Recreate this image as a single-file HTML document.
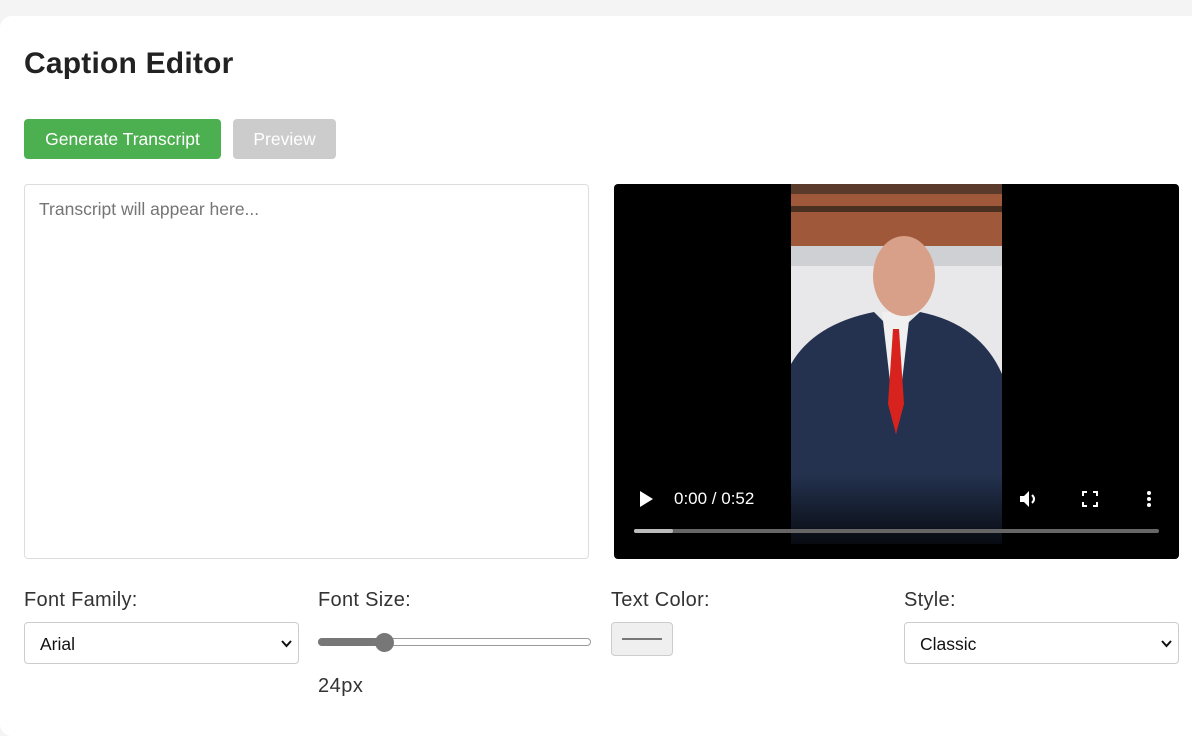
<!DOCTYPE html>
<html><head><style>
body{margin:0;width:1192px;height:713px;background:#f4f4f4;font-family:"Liberation Sans",sans-serif;overflow:hidden;position:relative;color:#222}
.card{position:absolute;left:0;top:16px;width:1210px;height:720px;background:#fff;border-radius:12px}
h1{position:absolute;left:24px;top:47px;margin:0;font-size:30px;font-weight:bold;color:#222;letter-spacing:0.2px}
.btn{position:absolute;top:119px;height:40px;border-radius:4px;color:#fff;font-size:17.5px;line-height:40px;text-align:center}
.ta{position:absolute;left:24px;top:184px;width:563px;height:373px;border:1px solid #ddd;border-radius:4px}
.ta span{position:absolute;left:14px;top:14px;color:#757575;font-size:17.5px}
.video{position:absolute;left:614px;top:184px;width:565px;height:375px;background:#000;border-radius:4px;overflow:hidden}
.lbl{position:absolute;top:589px;font-size:20px;color:#333;letter-spacing:0.3px}
.sel{position:absolute;top:622px;height:42px;border:1px solid #ccc;border-radius:4px;box-sizing:border-box;font-size:17.5px;line-height:42px;padding-left:15px;color:#111}
.ctl{position:absolute;color:#fff;font-size:17px}
</style></head><body>
<div class="card"></div>
<h1>Caption Editor</h1>
<div class="btn" style="left:24px;width:197px;background:#4caf50">Generate Transcript</div>
<div class="btn" style="left:233px;width:103px;background:#ccc">Preview</div>
<div class="ta"><span>Transcript will appear here...</span></div>
<div class="video">
<svg width="565" height="375" style="position:absolute;left:0;top:0">
<defs><linearGradient id="g" x1="0" y1="0" x2="0" y2="1"><stop offset="0" stop-color="#000" stop-opacity="0"/><stop offset="1" stop-color="#000" stop-opacity=".9"/></linearGradient></defs>
<rect x="177" y="0" width="211" height="360" fill="#e8e8ea"/>
<rect x="177" y="0" width="211" height="62" fill="#a0583a"/>
<rect x="177" y="0" width="211" height="10" fill="#5a3a2a"/>
<rect x="177" y="22" width="211" height="6" fill="#4a3020"/>
<rect x="177" y="62" width="211" height="20" fill="#cfd0d4"/>
<path d="M177 360 L177 180 Q200 140 260 128 L282 150 L306 128 Q366 140 388 190 L388 360Z" fill="#24324f"/>
<path d="M268 128 L282 250 L296 128Z" fill="#f0f0f0"/>
<path d="M279 145 L285 145 L290 220 L282 250 L274 220Z" fill="#d8221e"/>
<ellipse cx="290" cy="92" rx="31" ry="40" fill="#d8a088"/>
<rect x="177" y="290" width="211" height="80" fill="url(#g)"/>
</svg>
<svg class="ctl" style="left:24px;top:306px" width="16" height="18"><path d="M2 1 L15 9 L2 17Z" fill="#fff"/></svg>
<div class="ctl" style="left:60px;top:305px">0:00 / 0:52</div>
<svg class="ctl" style="left:405px;top:306px" width="22" height="18"><path d="M1 6 H5 L10 1 V17 L5 12 H1Z" fill="#fff"/><path d="M13 5 Q17 9 13 13" stroke="#fff" stroke-width="2" fill="none"/></svg>
<svg class="ctl" style="left:468px;top:307px" width="16" height="16"><path d="M1 5V1H5M11 1H15V5M15 11V15H11M5 15H1V11" stroke="#fff" stroke-width="2" fill="none"/></svg>
<svg class="ctl" style="left:532px;top:306px" width="6" height="18"><circle cx="3" cy="3" r="2" fill="#fff"/><circle cx="3" cy="9" r="2" fill="#fff"/><circle cx="3" cy="15" r="2" fill="#fff"/></svg>
<div style="position:absolute;left:20px;top:345px;width:525px;height:4px;background:#666;border-radius:2px"></div>
<div style="position:absolute;left:20px;top:345px;width:39px;height:4px;background:#bbb;border-radius:2px"></div>
</div>
<div class="lbl" style="left:24px">Font Family:</div>
<div class="lbl" style="left:318px">Font Size:</div>
<div class="lbl" style="left:611px">Text Color:</div>
<div class="lbl" style="left:904px">Style:</div>
<div class="sel" style="left:24px;width:275px">Arial<svg style="position:absolute;right:6px;top:17px" width="11" height="8"><path d="M1 1L5.5 6L10 1" stroke="#111" stroke-width="2" fill="none"/></svg></div>
<div class="sel" style="left:904px;width:275px">Classic<svg style="position:absolute;right:6px;top:17px" width="11" height="8"><path d="M1 1L5.5 6L10 1" stroke="#111" stroke-width="2" fill="none"/></svg></div>
<div style="position:absolute;left:318px;top:638px;width:273px;height:8px;border:1px solid #999;border-radius:5px;box-sizing:border-box;background:#fff"></div>
<div style="position:absolute;left:318px;top:638px;width:70px;height:8px;border-radius:5px;background:#777"></div>
<div style="position:absolute;left:375px;top:633px;width:19px;height:19px;border-radius:50%;background:#777"></div>
<div style="position:absolute;left:318px;top:675px;font-size:20px;color:#333;letter-spacing:0.5px">24px</div>
<div style="position:absolute;left:611px;top:622px;width:62px;height:34px;background:#efefef;border:1px solid #ccc;border-radius:4px;box-sizing:border-box"><div style="margin:15px 10px 0;height:2px;background:#777"></div></div>
</body></html>
